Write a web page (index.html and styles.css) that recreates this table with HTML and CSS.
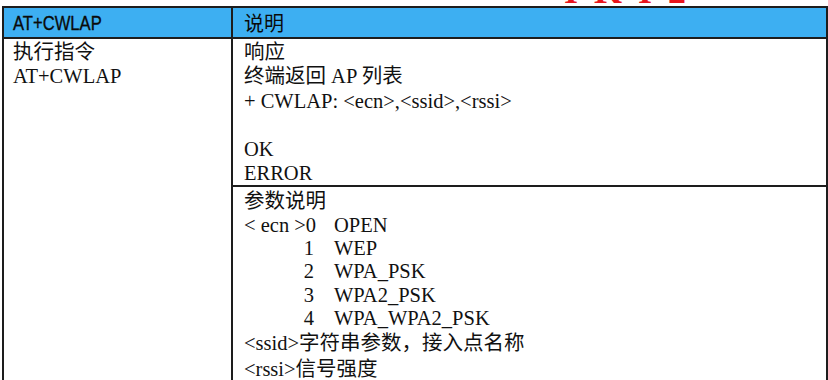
FILE: index.html
```html
<!DOCTYPE html>
<html lang="zh">
<head>
<meta charset="utf-8">
<title>AT+CWLAP</title>
<link rel="stylesheet" href="styles.css">
</head>
<body>
<div class="page">
  <div class="red-title"><span class="red-text">IKI2</span></div>
  <div class="table">
    <div class="row head">
      <div class="cell left"><span class="head-en">AT+CWLAP</span></div>
      <div class="cell right"><span class="head-cn">说明</span></div>
    </div>
    <div class="row body">
      <div class="cell left">
        <div class="line">执行指令</div>
        <div class="line">AT+CWLAP</div>
      </div>
      <div class="cell right stack">
        <div class="part resp">
          <div class="line">响应</div>
          <div class="line">终端返回 AP 列表</div>
          <div class="line">+ CWLAP: &lt;ecn&gt;,&lt;ssid&gt;,&lt;rssi&gt;</div>
          <div class="line"></div>
          <div class="line">OK</div>
          <div class="line">ERROR</div>
        </div>
        <div class="part params">
          <div class="line cn">参数说明</div>
          <div class="line enum"><span class="key">&lt; ecn &gt;0</span><span>OPEN</span></div>
          <div class="line enum"><span class="num">1</span><span>WEP</span></div>
          <div class="line enum"><span class="num">2</span><span>WPA_PSK</span></div>
          <div class="line enum"><span class="num">3</span><span>WPA2_PSK</span></div>
          <div class="line enum"><span class="num">4</span><span>WPA_WPA2_PSK</span></div>
          <div class="line cn">&lt;ssid&gt;字符串参数，接入点名称</div>
          <div class="line cn">&lt;rssi&gt;信号强度</div>
        </div>
      </div>
    </div>
  </div>
</div>
</body>
</html>
```
FILE: styles.css
```css
* { box-sizing: border-box; }
html, body { margin: 0; padding: 0; background: #fff; }
body { width: 828px; height: 380px; overflow: hidden; }

.page {
  position: relative;
  padding: 6px 0 0 2px;
  font-family: "Liberation Serif", "Noto Sans CJK SC", serif;
  color: #111;
}

.red-title {
  position: absolute;
  top: 0;
  left: 564px;
  height: 4px;
  width: 160px;
  overflow: hidden;
}
.red-text {
  display: block;
  margin-top: -27px;
  font-family: "Liberation Serif", serif;
  font-weight: bold;
  font-size: 36px;
  line-height: 36px;
  letter-spacing: 16px;
  color: #e8141b;
}

.table {
  width: 826px;
  border-top: 2px solid #1d1d1d;
  border-left: 2px solid #1d1d1d;
  border-right: 2px solid #1d1d1d;
}

.row {
  display: grid;
  grid-template-columns: 229px 1fr;
}

.head {
  height: 31px;
  background: #3daff2;
  border-bottom: 2px solid #1d1d1d;
}
.head .cell { display: flex; align-items: center; }
.head .left { padding-left: 9px; }
.head .right { padding-left: 11px; }
.head-en {
  font-family: "Liberation Sans", sans-serif;
  font-size: 20.5px;
  color: #0a0a0a;
  display: inline-block;
  transform: scaleX(0.81);
  transform-origin: left center;
  -webkit-text-stroke: 0.35px #0a0a0a;
}
.head-cn {
  font-family: "Noto Sans CJK SC", sans-serif;
  font-size: 20px;
  color: #0a0a0a;
}

.cell.left {
  border-right: 2px solid #1d1d1d;
}

.body { height: 345px; }
.body .left { padding: 1px 0 0 9px; }

.line {
  height: 24.3px;
  line-height: 24.3px;
  font-size: 20.5px;
  white-space: pre;
}

.stack { display: flex; flex-direction: column; }
.part { padding-left: 11px; }
.resp { height: 146px; padding-top: 1px; }
.params {
  border-top: 2px solid #1d1d1d;
  padding-top: 1px;
}
.params .line { height: 23.2px; line-height: 23.2px; }
.params .line.cn { height: 26px; line-height: 26px; }

.enum { display: flex; }
.enum .key { width: 90px; }
.enum .num { width: 70px; text-align: right; margin-right: 20px; }
```
